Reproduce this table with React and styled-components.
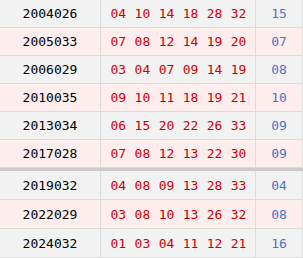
import React from "react";
import styled, { createGlobalStyle } from "styled-components";

const Global = createGlobalStyle`
  html, body { margin: 0; padding: 0; background: #ffffff; }
  body { font-family: "DejaVu Sans Mono", "Liberation Mono", monospace; }
`;

const Table = styled.div`
  width: 303px;
  display: flex;
  flex-direction: column;
`;

const Group = styled.div`
  display: flex;
  flex-direction: column;
`;

const Row = styled.div`
  display: grid;
  grid-template-columns: 101px 155px 47px;
  height: ${(p) => p.$h}px;
  background: ${(p) => (p.$alt ? "#fdeded" : "#f2f2f2")};
  border-bottom: 1px solid #dcdcdc;
  box-sizing: border-box;
`;

const Cell = styled.div`
  display: flex;
  align-items: center;
  justify-content: center;
  border-right: 1px solid #dcdcdc;
  font-size: 13px;
  color: ${(p) => p.$color || "#000"};
`;

const Balls = styled(Cell)`
  gap: 8.4px;
  color: #cc0000;
  padding-left: 1px;
`;

const Separator = styled.div`
  height: 3px;
  background: #cccccc;
`;

const top = [
  ["2004026", ["04", "10", "14", "18", "28", "32"], "15"],
  ["2005033", ["07", "08", "12", "14", "19", "20"], "07"],
  ["2006029", ["03", "04", "07", "09", "14", "19"], "08"],
  ["2010035", ["09", "10", "11", "18", "19", "21"], "10"],
  ["2013034", ["06", "15", "20", "22", "26", "33"], "09"],
  ["2017028", ["07", "08", "12", "13", "22", "30"], "09"],
];

const bottom = [
  ["2019032", ["04", "08", "09", "13", "28", "33"], "04"],
  ["2022029", ["03", "08", "10", "13", "26", "32"], "08"],
  ["2024032", ["01", "03", "04", "11", "12", "21"], "16"],
];

function DrawRow({ item, alt, h }) {
  const [issue, reds, blue] = item;
  return (
    <Row $alt={alt} $h={h}>
      <Cell>{issue}</Cell>
      <Balls>
        {reds.map((n, i) => (
          <span key={i}>{n}</span>
        ))}
      </Balls>
      <Cell $color="#4f72c8">{blue}</Cell>
    </Row>
  );
}

export default function App() {
  return (
    <>
      <Global />
      <Table>
        <Group>
          {top.map((it, i) => (
            <DrawRow key={it[0]} item={it} alt={i % 2 === 1} h={28} />
          ))}
        </Group>
        <Separator />
        <Group>
          {bottom.map((it, i) => (
            <DrawRow key={it[0]} item={it} alt={i % 2 === 1} h={29} />
          ))}
        </Group>
      </Table>
    </>
  );
}
